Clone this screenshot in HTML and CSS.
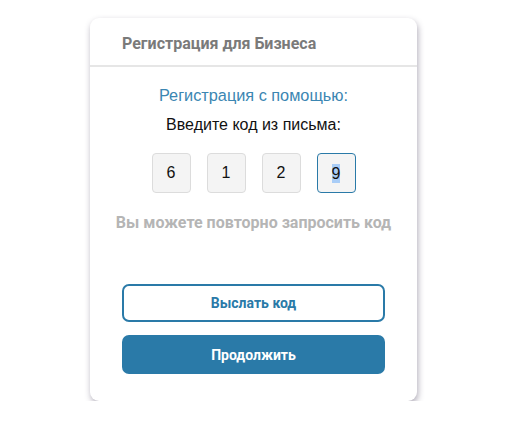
FILE: index.html
```html
<!DOCTYPE html>
<html lang="ru">
<head>
<meta charset="utf-8">
<link rel="stylesheet" href="styles.css">
</head>
<body>
<div class="card">
  <div class="card-header">Регистрация для Бизнеса</div>
  <div class="card-body">
    <div class="subtitle">Регистрация с помощью:</div>
    <div class="prompt">Введите код из письма:</div>
    <div class="code-row">
      <div class="code-box">6</div>
      <div class="code-box">1</div>
      <div class="code-box">2</div>
      <div class="code-box active"><span class="sel">9</span></div>
    </div>
    <div class="resend-hint">Вы можете повторно запросить код</div>
    <div class="actions">
      <button class="btn btn-outline">Выслать код</button>
      <button class="btn btn-primary">Продолжить</button>
    </div>
  </div>
</div>
</body>
</html>
```

FILE: styles.css
```css
html, body {
  margin: 0;
  padding: 0;
  background: #ffffff;
}
body {
  padding: 18px 0 0 90px;
  font-family: "Liberation Sans", Arial, sans-serif;
}
.card {
  width: 327px;
  height: 383px;
  box-sizing: border-box;
  background: #fff;
  border-radius: 9px;
  box-shadow: 1px 3px 6px rgba(60, 50, 80, 0.4);
  display: flex;
  flex-direction: column;
}
.card-header {
  height: 49px;
  box-sizing: border-box;
  border-bottom: 2px solid #e6e6e6;
  padding: 16px 0 0 32px;
  font-family: Roboto, "Liberation Sans", sans-serif;
  font-weight: 700;
  font-size: 16px;
  line-height: 20px;
  color: #7a7a7a;
}
.card-body {
  display: flex;
  flex-direction: column;
  align-items: center;
  padding: 18px 32px 0 32px;
}
.subtitle {
  font-size: 16.3px;
  line-height: 20px;
  color: #3b86b2;
  white-space: nowrap;
}
.prompt {
  margin-top: 10px;
  font-size: 16px;
  line-height: 20px;
  color: #111;
  white-space: nowrap;
}
.code-row {
  margin-top: 18px;
  display: flex;
  gap: 16px;
}
.code-box {
  width: 39px;
  height: 40px;
  box-sizing: border-box;
  border: 1px solid #dcdcdc;
  border-radius: 4px;
  background: #f4f4f4;
  display: flex;
  align-items: center;
  justify-content: center;
  font-size: 16px;
  color: #111;
}
.code-box.active {
  border-color: #2a7aa8;
}
.sel {
  background: #a9cdf7;
  line-height: 19px;
}
.resend-hint {
  margin-top: 20px;
  font-family: Roboto, "Liberation Sans", sans-serif;
  font-weight: 700;
  font-size: 16px;
  line-height: 20px;
  color: #b5b5b5;
  white-space: nowrap;
}
.actions {
  margin-top: 51px;
  display: flex;
  flex-direction: column;
  gap: 13px;
  align-self: stretch;
}
.btn {
  width: 263px;
  border-radius: 7px;
  font-family: Roboto, "Liberation Sans", sans-serif;
  font-weight: 700;
  font-size: 14px;
  cursor: pointer;
}
.btn-outline {
  height: 38px;
  background: #fff;
  border: 2px solid #2a7aa8;
  color: #2a7aa8;
}
.btn-primary {
  height: 39px;
  background: #2a7aa8;
  border: none;
  color: #fff;
}
```
